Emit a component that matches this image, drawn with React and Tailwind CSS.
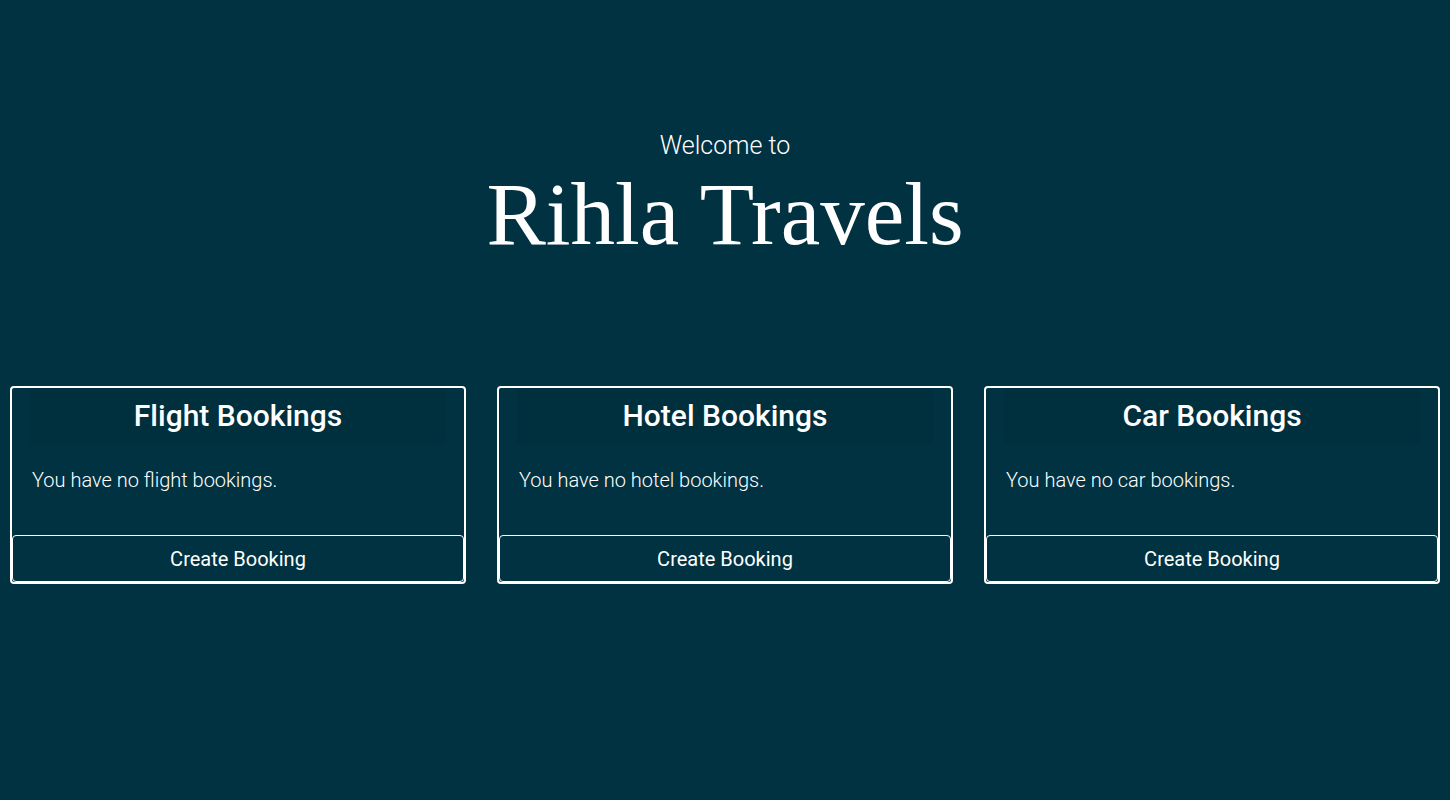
const sections = [
  { title: 'Flight Bookings', empty: 'You have no flight bookings.' },
  { title: 'Hotel Bookings', empty: 'You have no hotel bookings.' },
  { title: 'Car Bookings', empty: 'You have no car bookings.' },
]

function BookingCard({ title, empty }) {
  return (
    <div className="flex flex-col rounded-[4px] border-2 border-white">
      <div className="mx-[18px] flex h-[56px] items-center justify-center bg-[#002f3e] pb-[2px]">
        <h2 className="text-[30px] font-medium text-white">{title}</h2>
      </div>
      <div className="h-[91px] px-[20px] pt-[21px]">
        <p className="text-[20px] font-light text-white">{empty}</p>
      </div>
      <button className="h-[47px] rounded-[4px] border border-white pt-[1px] text-[20px] text-white">
        Create Booking
      </button>
    </div>
  )
}

export default function App() {
  return (
    <div className="min-h-[800px] bg-[#003242] font-['Roboto',sans-serif] text-white">
      <header className="flex flex-col items-center pt-[130px]">
        <p className="text-[25px] leading-[32px] font-light">Welcome to</p>
        <h1 className="mt-[8px] font-['Liberation_Serif',serif] text-[89px] leading-[88px]">Rihla Travels</h1>
      </header>
      <main className="mt-[128px] grid grid-cols-3 gap-[31px] px-[10px]">
        {sections.map((s) => (
          <BookingCard key={s.title} {...s} />
        ))}
      </main>
    </div>
  )
}
